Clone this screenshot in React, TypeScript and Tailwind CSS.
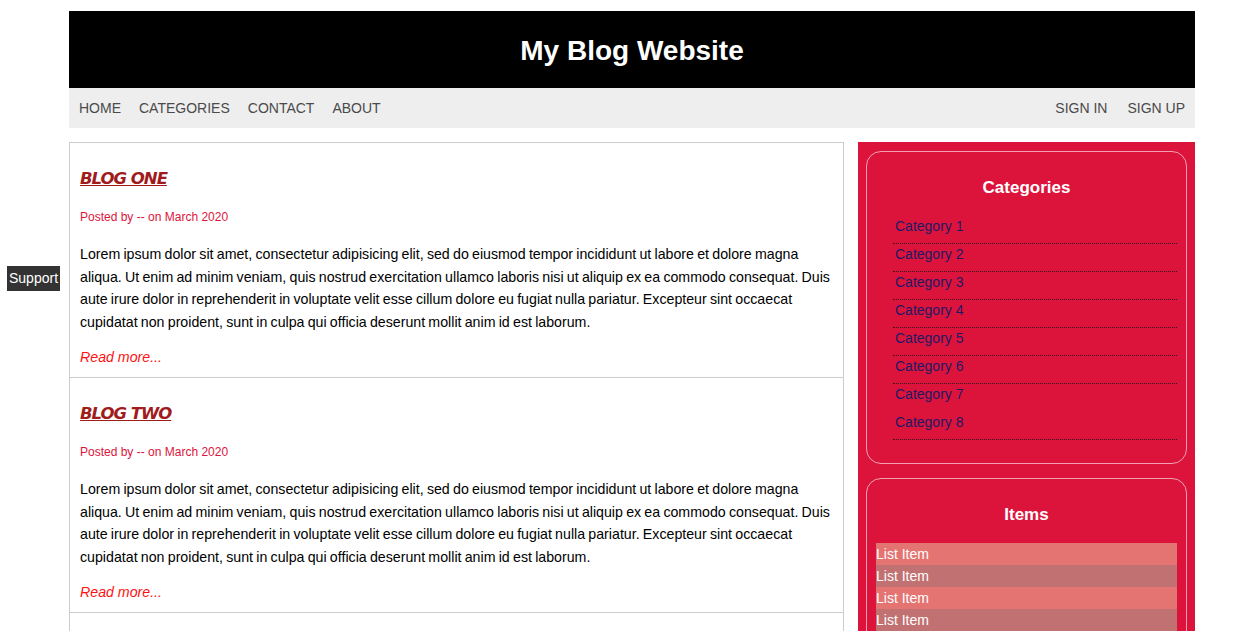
import React from "react";

const lorem =
  "Lorem ipsum dolor sit amet, consectetur adipisicing elit, sed do eiusmod tempor incididunt ut labore et dolore magna aliqua. Ut enim ad minim veniam, quis nostrud exercitation ullamco laboris nisi ut aliquip ex ea commodo consequat. Duis aute irure dolor in reprehenderit in voluptate velit esse cillum dolore eu fugiat nulla pariatur. Excepteur sint occaecat cupidatat non proident, sunt in culpa qui officia deserunt mollit anim id est laborum.";

const posts = ["BLOG ONE", "BLOG TWO", "BLOG THREE"];
const categories = ["Category 1", "Category 2", "Category 3", "Category 4", "Category 5", "Category 6", "Category 7", "Category 8"];
const items = ["List Item", "List Item", "List Item", "List Item", "List Item"];

const Post = ({ title }: { title: string }) => {
  return (
    <div className="border-b border-[#ccc] px-[10px] pb-[11px]">
      <h2 className="mt-[25px] text-[16.5px] leading-[22px] font-bold italic text-[#a01c1c] underline [font-family:'DejaVu_Sans',sans-serif] tracking-[-1px]">
        {title}
      </h2>
      <p className="mt-[20px] text-[12px] leading-[14px] text-[#dc143c]">Posted by -- on March 2020</p>
      <p className="mt-[19px] text-[14.2px] leading-[22.5px] text-black [word-spacing:-0.7px]">{lorem}</p>
      <a className="mt-[15px] block text-[14.2px] leading-[18px] italic text-[#ff1010]">Read more...</a>
    </div>
  );
};

const Card = ({ title, children }: { title: string; children: React.ReactNode }) => {
  return (
    <div className="rounded-[15px] border border-white/60 px-[9px] pb-[23px]">
      <h3 className="mt-[26px] text-center text-[17px] leading-[20px] font-bold text-white">{title}</h3>
      <div className="mt-[18px]">{children}</div>
    </div>
  );
};

export default function App() {
  return (
    <div className="min-h-screen bg-white pt-[11px] [font-family:'Liberation_Sans',Arial,sans-serif]">
      <div className="ml-[69px] w-[1126px]">
        <header className="flex h-[77px] items-center justify-center bg-black">
          <h1 className="mt-[2px] text-[28px] font-bold text-white">My Blog Website</h1>
        </header>
        <nav className="flex h-[40px] items-center justify-between bg-[#eee] px-[10px] text-[14px] text-[#4a4a4a] uppercase">
          <div className="flex gap-[18px]">
            <a>Home</a>
            <a>Categories</a>
            <a>Contact</a>
            <a>About</a>
          </div>
          <div className="flex gap-[20px]">
            <a>Sign In</a>
            <a>Sign Up</a>
          </div>
        </nav>

        <div className="mt-[14px] flex gap-[14px]">
          <main className="w-[775px] border-x border-t border-[#ccc]">
            {posts.map((p) => (
              <Post key={p} title={p} />
            ))}
          </main>

          <aside className="flex w-[337px] flex-col gap-[14px] bg-[#dc143c] px-[8px] pt-[9px] pb-[20px]">
            <Card title="Categories">
              <ul className="ml-[17px]">
                {categories.map((c, i) => (
                  <li
                    key={c}
                    className={`pt-[2px] pb-[9px] pl-[2px] text-[14px] leading-[16px] text-[#1c1a66] ${
                      i === 6 ? "border-b border-transparent" : "border-b border-dotted border-[#3a1020]"
                    }`}>
                    {c}
                  </li>
                ))}
              </ul>
            </Card>
            <Card title="Items">
              <ul>
                {items.map((it, i) => (
                  <li
                    key={i}
                    className={`h-[22px] text-[14px] leading-[22px] text-white ${i % 2 === 0 ? "bg-[#e47472]" : "bg-[#c17171]"}`}>
                    {it}
                  </li>
                ))}
              </ul>
            </Card>
          </aside>
        </div>
      </div>

      <div className="fixed top-[266px] left-[7px] bg-[#333] px-[2px] text-[14px] leading-[25px] text-white">Support</div>
    </div>
  );
}
